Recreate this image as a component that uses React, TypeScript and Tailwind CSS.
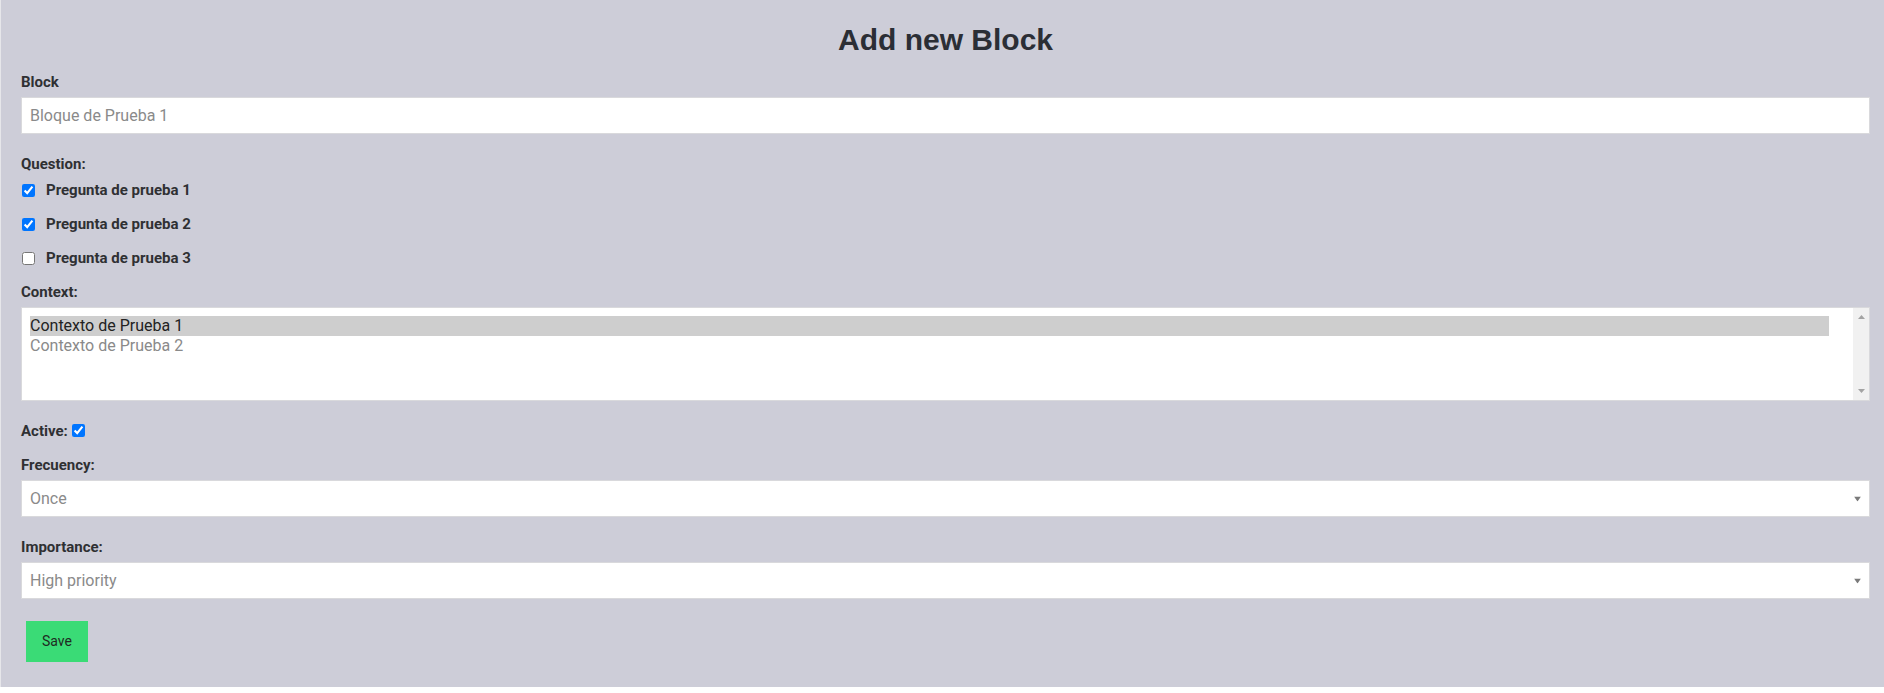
import { useState } from "react";

const QUESTIONS = [
  { id: 1, label: "Pregunta de prueba 1", checked: true },
  { id: 2, label: "Pregunta de prueba 2", checked: true },
  { id: 3, label: "Pregunta de prueba 3", checked: false },
];

const CONTEXTS = ["Contexto de Prueba 1", "Contexto de Prueba 2"];

function Label({ children, className = "" }: { children: React.ReactNode; className?: string }) {
  return (
    <label className={`block text-[15px] font-bold leading-[20px] text-[#2f3033] ${className}`}>
      {children}
    </label>
  );
}

function Select({ value, options }: { value: string; options: string[] }) {
  return (
    <div className="relative">
      <select
        defaultValue={value}
        className="block h-[37px] w-full appearance-none rounded-none border border-[#d9d9dc] bg-white pl-[8px] pr-[24px] text-[16px] text-[#8a8a8a] outline-none"
      >
        {options.map((o) => (
          <option key={o}>{o}</option>
        ))}
      </select>
      <svg
        className="pointer-events-none absolute right-[9px] top-1/2 -translate-y-1/2"
        width="7"
        height="5"
        viewBox="0 0 7 5"
      >
        <path d="M0 0h7L3.5 5z" fill="#7a7a7a" />
      </svg>
    </div>
  );
}

export default function App() {
  const [selectedCtx, setSelectedCtx] = useState(0);

  return (
    <div className="h-[687px] w-full border-l border-[#e6e6ea] bg-[#cdcdd8] pl-[20px] pr-[14px] pt-[22px] font-['Roboto',sans-serif]">
      <h1 className="text-center font-['Liberation_Sans',Arial,sans-serif] text-[30px] font-bold leading-[36px] text-[#2b2e35]">
        Add new Block
      </h1>

      <form className="mt-[14px]" onSubmit={(e) => e.preventDefault()}>
        <Label className="mb-[5px]">Block</Label>
        <input
          type="text"
          defaultValue="Bloque de Prueba 1"
          className="block h-[37px] w-full border border-[#d9d9dc] bg-white px-[8px] text-[16px] text-[#8a8a8a] outline-none"
        />

        <Label className="mb-[6px] mt-[20px]">Question:</Label>
        <div className="flex flex-col gap-[14px]">
          {QUESTIONS.map((q) => (
            <div key={q.id} className="flex h-[20px] items-center gap-[11px] pl-[1px]">
              <input type="checkbox" defaultChecked={q.checked} className="m-0 h-[13px] w-[13px]" />
              <span className="text-[15px] font-bold leading-[20px] text-[#2f3033]">{q.label}</span>
            </div>
          ))}
        </div>

        <Label className="mb-[5px] mt-[14px]">Context:</Label>
        <div className="flex h-[94px] border border-[#d9d9dc] bg-white">
          <div className="min-w-0 flex-1 pl-[8px] pr-[24px] pt-[8px]">
            {CONTEXTS.map((c, i) => (
              <div
                key={c}
                onClick={() => setSelectedCtx(i)}
                className={`h-[20px] text-[16px] leading-[20px] ${
                  i === selectedCtx ? "bg-[#cecece] text-[#222]" : "text-[#8a8a8a]"
                }`}
              >
                {c}
              </div>
            ))}
          </div>
          <div className="flex w-[16px] flex-col items-center justify-between bg-[#f1f1f1] pb-[7px] pt-[7px]">
            <svg width="7" height="4" viewBox="0 0 7 4">
              <path d="M3.5 0L7 4H0z" fill="#a3a3a3" />
            </svg>
            <svg width="7" height="4" viewBox="0 0 7 4">
              <path d="M0 0h7L3.5 4z" fill="#a3a3a3" />
            </svg>
          </div>
        </div>

        <div className="mt-[20px] flex h-[20px] items-center">
          <span className="text-[15px] font-bold leading-[20px] text-[#2f3033]">Active:</span>
          <input type="checkbox" defaultChecked className="mb-[2px] ml-[4px] h-[13px] w-[13px]" />
        </div>

        <Label className="mb-[5px] mt-[14px]">Frecuency:</Label>
        <Select value="Once" options={["Once", "Daily", "Weekly", "Monthly"]} />

        <Label className="mb-[5px] mt-[20px]">Importance:</Label>
        <Select value="High priority" options={["High priority", "Medium priority", "Low priority"]} />

        <button
          type="submit"
          className="ml-[5px] mt-[22px] h-[41px] w-[62px] bg-[#3adb76] text-[14px] text-[#1f2a22]"
        >
          Save
        </button>
      </form>
    </div>
  );
}
